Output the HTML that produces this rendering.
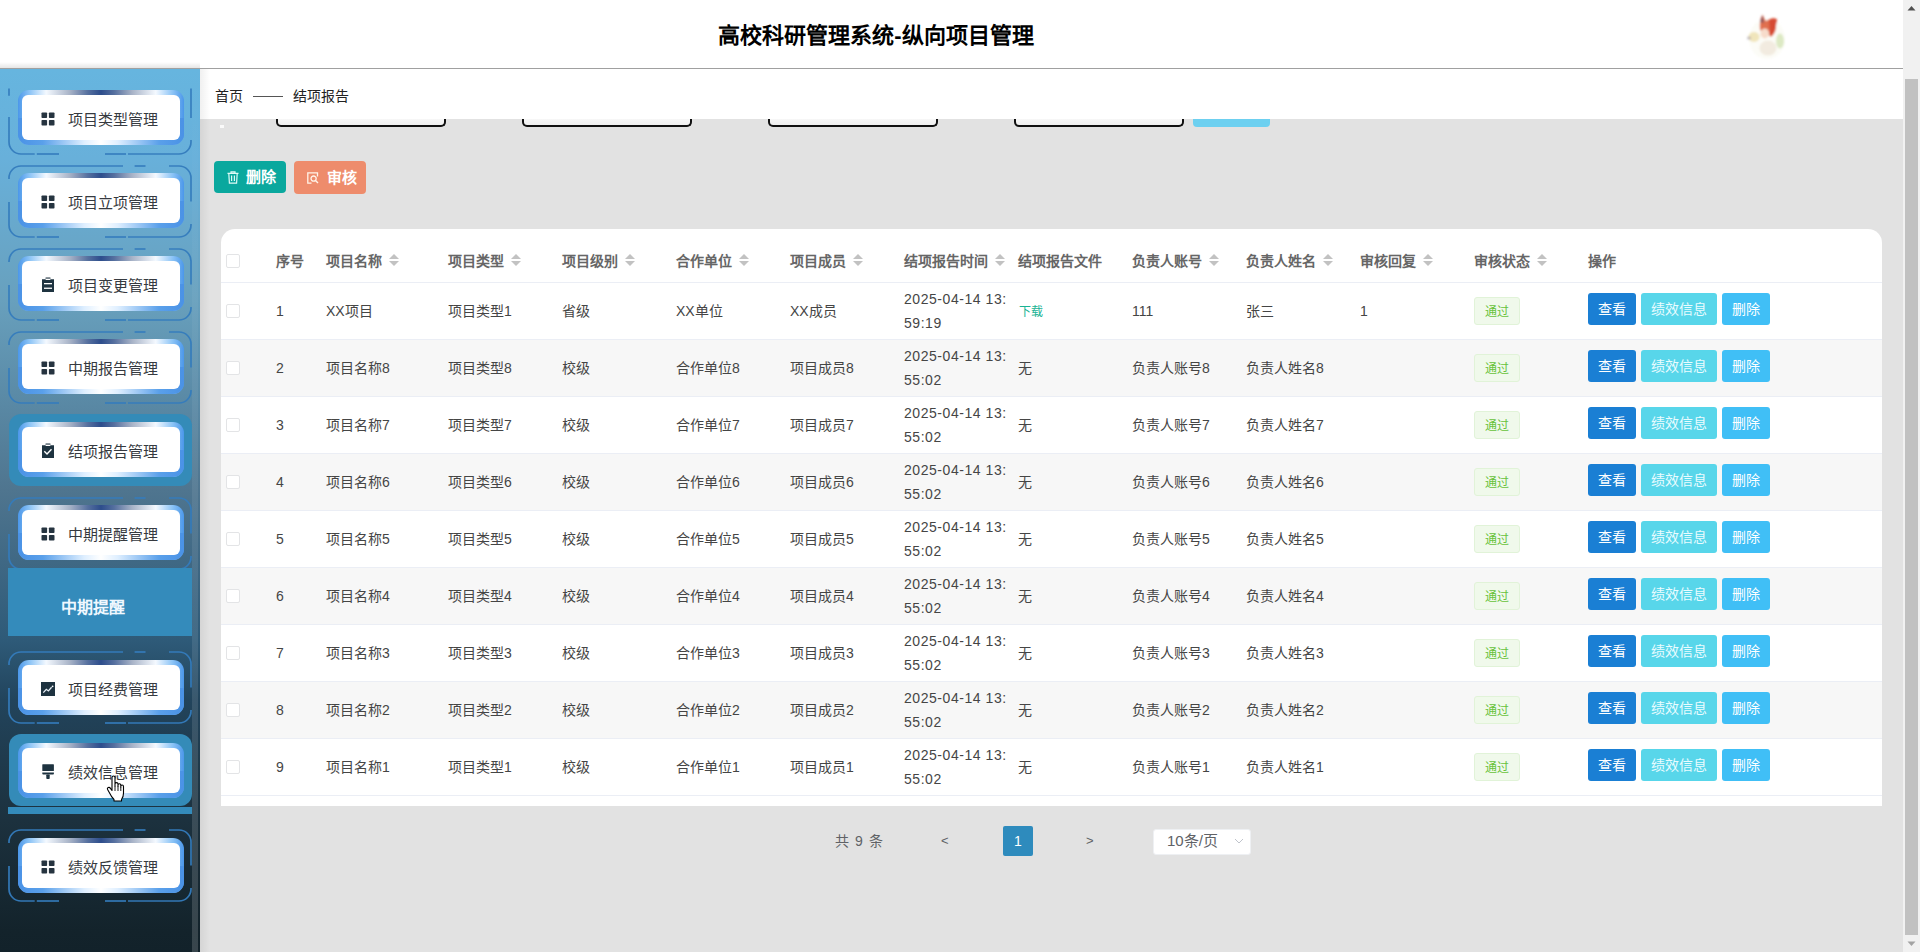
<!DOCTYPE html><html lang="zh-CN"><head><meta charset="utf-8"><title>高校科研管理系统</title><style>
*{box-sizing:border-box;margin:0;padding:0}
html,body{width:1920px;height:952px;overflow:hidden}
body{position:relative;background:#e2e2e2;font-family:"Liberation Sans",sans-serif;color:#606266}
.abs{position:absolute}
#hdr{position:absolute;left:0;top:0;width:1903px;height:69px;background:#fff;border-bottom:1px solid #a0a0a0}
#title{position:absolute;left:0;top:2px;width:1752px;text-align:center;line-height:68px;font-size:22px;font-weight:bold;color:#000;letter-spacing:0px}
#sb{position:absolute;left:0;top:69px;width:200px;height:883px;
 background:linear-gradient(to bottom,#66b5df 0px,#68b0da 90px,#68a0bd 231px,#5988a4 337px,#4f758f 421px,#2e5a78 572px,#22445c 631px,#1c313e 752px,#13232b 862px,#12222a 883px)}
#shadow{position:absolute;left:200px;top:69px;width:10px;height:883px;background:linear-gradient(to right,rgba(0,0,0,0.06),rgba(0,0,0,0))}
#bc{position:absolute;left:200px;top:69px;width:1703px;height:50px;background:#fff}
.bct{position:absolute;top:87px;font-size:14px;color:#222;line-height:18px}
.inp{position:absolute;top:119px;width:170px;height:8px;border:2px solid #111;border-top:none;border-radius:0 0 5px 5px;background:linear-gradient(#f7f7f7,#f0f0f0)}
.btn1{position:absolute;top:161px;height:32px;border-radius:4px;color:#fff;font-size:15px;line-height:32px;font-weight:bold}
#card{position:absolute;left:221px;top:229px;width:1661px;height:577px;background:#fff;border-radius:14px 14px 0 0}
.row{position:absolute;left:221px;width:1661px;height:57px;border-bottom:1px solid #ebeef5}
.cb{position:absolute;left:226px;width:14px;height:14px;border:1px solid #e3e4e6;border-radius:2px;background:#fff}
.th{position:absolute;top:252px;font-size:14px;font-weight:bold;color:#666;line-height:18px;white-space:nowrap}
.td{position:absolute;font-size:14px;color:#454545;line-height:18px;white-space:nowrap}
.sort{position:absolute;top:254px;width:10px;height:12px}
.tag{position:absolute;width:46px;height:28px;background:#f0f9eb;border:1px solid #e1f3d8;border-radius:3px;color:#67c23a;font-size:12px;line-height:28px;text-align:center}
.ob{position:absolute;height:32px;border-radius:3px;color:#fff;font-size:14px;line-height:32px;text-align:center}
.mi{position:absolute;left:9px;width:182px;height:71px;border:2px solid #3a7fbd;border-radius:10px}
.glow{position:absolute;left:18px;width:166px;height:55px;border-radius:11px;
 background:linear-gradient(to right,#4b97ea 0%,#8cc4f6 7%,#f4f9ff 17%,#a9b4c8 31%,#56709f 42%,#2d4d8c 50%,#56709f 58%,#a9b4c8 69%,#f4f9ff 83%,#8cc4f6 93%,#4b97ea 100%)}
.glowb{position:absolute;left:0;right:0;bottom:0;height:50%;border-radius:0 0 11px 11px;
 background:linear-gradient(to right,#4a92e6 0%,#5aa0ea 15%,#dfefff 40%,#ffffff 50%,#dfefff 60%,#5aa0ea 85%,#4a92e6 100%)}
.wbox{position:absolute;left:22px;width:158px;height:45px;background:#fff;border-radius:6px}
.mt{position:absolute;left:68px;font-size:15px;color:#363a40;line-height:20px;white-space:nowrap}
.ic{position:absolute;left:41px;width:14px;height:14px}
.ic svg,.sort svg{display:block}
</style></head><body>
<div id="hdr"><div id="title">高校科研管理系统-纵向项目管理</div></div>
<svg class="abs" style="left:1740px;top:8px" width="52" height="54" viewBox="0 0 52 54">
<defs><filter id="bl" x="-50%" y="-50%" width="200%" height="200%"><feGaussianBlur stdDeviation="0.9"/></filter></defs>
<g filter="url(#bl)">
<ellipse cx="27" cy="31" rx="18" ry="20" fill="#fbfbf4" opacity="0.7"/>
<ellipse cx="14" cy="29" rx="5.5" ry="5" fill="#efe2b0" opacity="0.85"/>
<ellipse cx="9" cy="30" rx="2" ry="1.5" fill="#9a8fa0" opacity="0.6"/>
<ellipse cx="40" cy="33" rx="4" ry="7.5" fill="#d9e8bf" opacity="0.9"/>
<ellipse cx="28" cy="40" rx="8.5" ry="7.5" fill="#f2ebe0"/>
<path d="M20 22 Q19 12 22.5 6.8 Q25 12 26 13 Q31 9 37 11.4 Q35 16 36 20 Q35 26 31 29 L28 26 Z" fill="#e07050"/>
<path d="M20 14 Q22 9 22.5 7 Q23.5 11 24 15 Z" fill="#8a5a60"/>
<path d="M29 12 Q33 9 37 11.4 Q36 18 35 22 Q33 27 30 28 Z" fill="#d64a32"/>
<ellipse cx="24.8" cy="25.5" rx="4.3" ry="5" fill="#f7dccb"/>
</g></svg>
<div id="sb"></div><div class="abs" style="left:192px;top:69px;width:6px;height:883px;background:linear-gradient(rgba(255,255,255,0) 0px,rgba(255,255,255,0.06) 330px,rgba(255,255,255,0.10) 600px,rgba(255,255,255,0.16) 883px)"></div><div class="abs" style="left:0;top:62px;width:200px;height:6px;background:linear-gradient(rgba(0,0,0,0),rgba(0,0,0,0.10))"></div>
<svg class="abs" style="left:8px;top:82px" width="184" height="73" viewBox="0 0 184 73"><g stroke="#347cbd" stroke-width="1.7" fill="none" opacity="0.95"><path d="M1 6.4 V13.7"/><path d="M183 6.4 V36"/><path d="M183 58 V60 A12 12 0 0 1 171 72 H120"/><path d="M118 72 H97"/><path d="M51 72 H28.8"/><path d="M26.7 72 H13 A12 12 0 0 1 1 60 V35"/></g></svg>
<div class="glow" style="top:90px"><div class="glowb"></div></div>
<div class="wbox" style="top:95px"></div>
<div class="ic" style="top:112px"><svg viewBox="0 0 14 14" width="14" height="14"><rect x="0.5" y="0.5" width="5.6" height="5.6" rx="0.8" fill="#263440"/><rect x="7.9" y="0.5" width="5.6" height="5.6" rx="0.8" fill="#263440"/><rect x="0.5" y="7.9" width="5.6" height="5.6" rx="0.8" fill="#263440"/><rect x="7.9" y="7.9" width="5.6" height="5.6" rx="0.8" fill="#263440"/></svg></div>
<div class="mt" style="top:110px">项目类型管理</div>
<svg class="abs" style="left:8px;top:165px" width="184" height="73" viewBox="0 0 184 73"><g stroke="#347cbd" stroke-width="1.7" fill="none" opacity="0.95"><path d="M1 14 V13 A12 12 0 0 1 13 1 H115"/><path d="M126.6 1 H137.5"/><path d="M161 1 H171 A12 12 0 0 1 183 13 V36.6"/><path d="M183 59 V60 A12 12 0 0 1 171 72 H120"/><path d="M118 72 H97"/><path d="M51 72 H28.8"/><path d="M26.7 72 H13 A12 12 0 0 1 1 60 V37"/></g></svg>
<div class="glow" style="top:173px"><div class="glowb"></div></div>
<div class="wbox" style="top:178px"></div>
<div class="ic" style="top:195px"><svg viewBox="0 0 14 14" width="14" height="14"><rect x="0.5" y="0.5" width="5.6" height="5.6" rx="0.8" fill="#263440"/><rect x="7.9" y="0.5" width="5.6" height="5.6" rx="0.8" fill="#263440"/><rect x="0.5" y="7.9" width="5.6" height="5.6" rx="0.8" fill="#263440"/><rect x="7.9" y="7.9" width="5.6" height="5.6" rx="0.8" fill="#263440"/></svg></div>
<div class="mt" style="top:193px">项目立项管理</div>
<svg class="abs" style="left:8px;top:248px" width="184" height="73" viewBox="0 0 184 73"><g stroke="#347cbd" stroke-width="1.7" fill="none" opacity="0.95"><path d="M1 14 V13 A12 12 0 0 1 13 1 H115"/><path d="M126.6 1 H137.5"/><path d="M161 1 H171 A12 12 0 0 1 183 13 V36.6"/><path d="M183 59 V60 A12 12 0 0 1 171 72 H120"/><path d="M118 72 H97"/><path d="M51 72 H28.8"/><path d="M26.7 72 H13 A12 12 0 0 1 1 60 V37"/></g></svg>
<div class="glow" style="top:256px"><div class="glowb"></div></div>
<div class="wbox" style="top:261px"></div>
<div class="ic" style="top:277px"><svg viewBox="0 0 14 16" width="14" height="16"><path d="M1 2.2 H4.6 V0.6 H9.4 V2.2 H13 V15 H1 Z" fill="#1e3340"/><rect x="4.6" y="1.6" width="4.8" height="1.4" fill="#fff"/><rect x="3" y="6" width="8" height="1.3" fill="#fff"/><rect x="3" y="10.6" width="8" height="1.3" fill="#fff"/></svg></div>
<div class="mt" style="top:276px">项目变更管理</div>
<svg class="abs" style="left:8px;top:331px" width="184" height="73" viewBox="0 0 184 73"><g stroke="#347cbd" stroke-width="1.7" fill="none" opacity="0.95"><path d="M1 14 V13 A12 12 0 0 1 13 1 H115"/><path d="M126.6 1 H137.5"/><path d="M161 1 H171 A12 12 0 0 1 183 13 V36.6"/><path d="M183 59 V60 A12 12 0 0 1 171 72 H120"/><path d="M118 72 H97"/><path d="M51 72 H28.8"/><path d="M26.7 72 H13 A12 12 0 0 1 1 60 V37"/></g></svg>
<div class="glow" style="top:339px"><div class="glowb"></div></div>
<div class="wbox" style="top:344px"></div>
<div class="ic" style="top:361px"><svg viewBox="0 0 14 14" width="14" height="14"><rect x="0.5" y="0.5" width="5.6" height="5.6" rx="0.8" fill="#263440"/><rect x="7.9" y="0.5" width="5.6" height="5.6" rx="0.8" fill="#263440"/><rect x="0.5" y="7.9" width="5.6" height="5.6" rx="0.8" fill="#263440"/><rect x="7.9" y="7.9" width="5.6" height="5.6" rx="0.8" fill="#263440"/></svg></div>
<div class="mt" style="top:359px">中期报告管理</div>
<div class="mi" style="top:414px;background:#348bb8;border:none;height:72px;width:183px;border-radius:12px"></div>
<div class="glow" style="top:422px"><div class="glowb"></div></div>
<div class="wbox" style="top:427px"></div>
<div class="ic" style="top:443px"><svg viewBox="0 0 14 16" width="14" height="16"><path d="M1 2.2 H4.6 V0.6 H9.4 V2.2 H13 V15 H1 Z" fill="#1e3340"/><rect x="4.6" y="1.6" width="4.8" height="1.4" fill="#fff"/><path d="M3.3 8.3 L6 10.9 L10.5 6.2" stroke="#fff" stroke-width="1.4" fill="none"/></svg></div>
<div class="mt" style="top:442px">结项报告管理</div>
<svg class="abs" style="left:8px;top:497px" width="184" height="73" viewBox="0 0 184 73"><g stroke="#347cbd" stroke-width="1.7" fill="none" opacity="0.95"><path d="M1 14 V13 A12 12 0 0 1 13 1 H115"/><path d="M126.6 1 H137.5"/><path d="M161 1 H171 A12 12 0 0 1 183 13 V36.6"/><path d="M183 59 V60 A12 12 0 0 1 171 72 H120"/><path d="M118 72 H97"/><path d="M51 72 H28.8"/><path d="M26.7 72 H13 A12 12 0 0 1 1 60 V37"/></g></svg>
<div class="glow" style="top:505px"><div class="glowb"></div></div>
<div class="wbox" style="top:510px"></div>
<div class="ic" style="top:527px"><svg viewBox="0 0 14 14" width="14" height="14"><rect x="0.5" y="0.5" width="5.6" height="5.6" rx="0.8" fill="#263440"/><rect x="7.9" y="0.5" width="5.6" height="5.6" rx="0.8" fill="#263440"/><rect x="0.5" y="7.9" width="5.6" height="5.6" rx="0.8" fill="#263440"/><rect x="7.9" y="7.9" width="5.6" height="5.6" rx="0.8" fill="#263440"/></svg></div>
<div class="mt" style="top:525px">中期提醒管理</div>
<svg class="abs" style="left:8px;top:651px" width="184" height="73" viewBox="0 0 184 73"><g stroke="#347cbd" stroke-width="1.7" fill="none" opacity="0.95"><path d="M1 14 V13 A12 12 0 0 1 13 1 H115"/><path d="M126.6 1 H137.5"/><path d="M161 1 H171 A12 12 0 0 1 183 13 V36.6"/><path d="M183 59 V60 A12 12 0 0 1 171 72 H120"/><path d="M118 72 H97"/><path d="M51 72 H28.8"/><path d="M26.7 72 H13 A12 12 0 0 1 1 60 V37"/></g></svg>
<div class="glow" style="top:660px"><div class="glowb"></div></div>
<div class="wbox" style="top:665px"></div>
<div class="ic" style="top:682px"><svg viewBox="0 0 14 14" width="14" height="14"><rect x="0" y="0" width="14" height="14" fill="#1e3340"/><path d="M2.3 10.6 L5.3 7.3 L7.4 8.9 L10.6 5.2" stroke="#e8f0f8" stroke-width="1.3" fill="none"/><circle cx="11.6" cy="4.3" r="0.9" fill="#fff"/></svg></div>
<div class="mt" style="top:680px">项目经费管理</div>
<div class="mi" style="top:734px;background:#348bb8;border:none;height:72px;width:183px;border-radius:12px"></div>
<div class="glow" style="top:743px"><div class="glowb"></div></div>
<div class="wbox" style="top:748px"></div>
<div class="ic" style="top:764px"><svg viewBox="0 0 14 16" width="14" height="16"><rect x="1.3" y="0.2" width="11.6" height="6.8" rx="0.6" fill="#1e3340"/><path d="M1.3 8.5 H12.9 V9.8 Q12.9 10.6 12 10.6 H2.2 Q1.3 10.6 1.3 9.8 Z" fill="#1e3340"/><rect x="5.3" y="10.4" width="3.4" height="4.6" rx="0.8" fill="#1e3340"/></svg></div>
<div class="mt" style="top:763px">绩效信息管理</div>
<svg class="abs" style="left:8px;top:829px" width="184" height="73" viewBox="0 0 184 73"><g stroke="#347cbd" stroke-width="1.7" fill="none" opacity="0.95"><path d="M1 14 V13 A12 12 0 0 1 13 1 H115"/><path d="M126.6 1 H137.5"/><path d="M161 1 H171 A12 12 0 0 1 183 13 V36.6"/><path d="M183 59 V60 A12 12 0 0 1 171 72 H120"/><path d="M118 72 H97"/><path d="M51 72 H28.8"/><path d="M26.7 72 H13 A12 12 0 0 1 1 60 V37"/></g></svg>
<div class="glow" style="top:838px"><div class="glowb"></div></div>
<div class="wbox" style="top:843px"></div>
<div class="ic" style="top:860px"><svg viewBox="0 0 14 14" width="14" height="14"><rect x="0.5" y="0.5" width="5.6" height="5.6" rx="0.8" fill="#263440"/><rect x="7.9" y="0.5" width="5.6" height="5.6" rx="0.8" fill="#263440"/><rect x="0.5" y="7.9" width="5.6" height="5.6" rx="0.8" fill="#263440"/><rect x="7.9" y="7.9" width="5.6" height="5.6" rx="0.8" fill="#263440"/></svg></div>
<div class="mt" style="top:858px">绩效反馈管理</div>
<div class="abs" style="left:8px;top:568px;width:184px;height:68px;background:#348bbb"></div>
<div class="abs" style="left:61px;top:598px;font-size:16px;font-weight:bold;color:#f0f8ff;line-height:20px">中期提醒</div>
<div class="abs" style="left:8px;top:807px;width:184px;height:7px;background:#348bbb"></div>
<svg class="abs" style="left:106px;top:775px" width="22" height="28" viewBox="0 0 22 28">
<path d="M6 2.5 Q6 1 7.5 1 Q9 1 9 2.5 V11 V9 Q9 7.6 10.5 7.6 Q12 7.6 12 9 V11.5 V10 Q12 8.8 13.4 8.8 Q14.8 8.8 14.8 10 V12 V11 Q14.8 10 16.1 10 Q17.5 10 17.5 11.5 V18 Q17.5 22 15.5 24.5 V26 H8 V24.5 Q5.5 22 3 17 L1.6 14.5 Q1 13 2.3 12.5 Q3.6 12 4.6 13.6 L6 15.5 Z" fill="#fff" stroke="#000" stroke-width="1.1" stroke-linejoin="round"/>
<path d="M9 11 V16 M12 11.5 V16 M14.8 12 V16" stroke="#000" stroke-width="0.9"/>
</svg>
<div id="bc"></div><div id="shadow"></div>
<div class="bct" style="left:215px">首页</div>
<div class="abs" style="left:253px;top:96px;width:30px;height:1px;background:#555"></div>
<div class="bct" style="left:293px">结项报告</div>
<div class="inp" style="left:276px"></div>
<div class="inp" style="left:522px"></div>
<div class="inp" style="left:768px"></div>
<div class="inp" style="left:1014px"></div>
<div class="abs" style="left:1193px;top:119px;width:77px;height:8px;background:#6dd0f0;border-radius:0 0 4px 4px"></div>
<div class="abs" style="left:220px;top:125px;width:4px;height:3px;background:#fafafa"></div>
<div class="btn1" style="left:214px;width:72px;background:#0aa89e"><svg class="abs" style="left:13px;top:10px" width="12" height="13" viewBox="0 0 12 13"><path d="M0.5 2.3 H11.5 M4 2.3 V0.8 H8 V2.3 M1.8 2.3 L2.4 12.2 H9.6 L10.2 2.3 M4.6 4.6 V10 M7.4 4.6 V10" stroke="#dffaf6" stroke-width="1.2" fill="none"/></svg><span class="abs" style="left:32px;top:0">删除</span></div>
<div class="btn1" style="left:294px;width:72px;height:33px;background:#ee8c6c"><svg class="abs" style="left:13px;top:11px" width="12" height="12" viewBox="0 0 12 12"><path d="M10.5 4.5 V0.8 H0.8 V11.2 H4.5" stroke="#fff3e8" stroke-width="1.3" fill="none"/><circle cx="6.6" cy="6.6" r="2.6" stroke="#fff3e8" stroke-width="1.3" fill="none"/><path d="M8.5 8.5 L11 11" stroke="#fff3e8" stroke-width="1.4"/></svg><span class="abs" style="left:33px;top:1px">审核</span></div>
<div id="card"></div>
<div class="abs" style="left:221px;top:282px;width:1661px;height:1px;background:#ebeef5"></div>
<div class="cb" style="top:254px"></div>
<div class="th" style="left:276px">序号</div>
<div class="th" style="left:326px">项目名称</div>
<div class="sort" style="left:389px"><svg viewBox="0 0 10 12" width="10" height="12"><path d="M5 0 L10 5 H0 Z" fill="#c2c2c2"/><path d="M5 12 L10 7 H0 Z" fill="#c2c2c2"/></svg></div>
<div class="th" style="left:448px">项目类型</div>
<div class="sort" style="left:511px"><svg viewBox="0 0 10 12" width="10" height="12"><path d="M5 0 L10 5 H0 Z" fill="#c2c2c2"/><path d="M5 12 L10 7 H0 Z" fill="#c2c2c2"/></svg></div>
<div class="th" style="left:562px">项目级别</div>
<div class="sort" style="left:625px"><svg viewBox="0 0 10 12" width="10" height="12"><path d="M5 0 L10 5 H0 Z" fill="#c2c2c2"/><path d="M5 12 L10 7 H0 Z" fill="#c2c2c2"/></svg></div>
<div class="th" style="left:676px">合作单位</div>
<div class="sort" style="left:739px"><svg viewBox="0 0 10 12" width="10" height="12"><path d="M5 0 L10 5 H0 Z" fill="#c2c2c2"/><path d="M5 12 L10 7 H0 Z" fill="#c2c2c2"/></svg></div>
<div class="th" style="left:790px">项目成员</div>
<div class="sort" style="left:853px"><svg viewBox="0 0 10 12" width="10" height="12"><path d="M5 0 L10 5 H0 Z" fill="#c2c2c2"/><path d="M5 12 L10 7 H0 Z" fill="#c2c2c2"/></svg></div>
<div class="th" style="left:904px">结项报告时间</div>
<div class="sort" style="left:995px"><svg viewBox="0 0 10 12" width="10" height="12"><path d="M5 0 L10 5 H0 Z" fill="#c2c2c2"/><path d="M5 12 L10 7 H0 Z" fill="#c2c2c2"/></svg></div>
<div class="th" style="left:1018px">结项报告文件</div>
<div class="th" style="left:1132px">负责人账号</div>
<div class="sort" style="left:1209px"><svg viewBox="0 0 10 12" width="10" height="12"><path d="M5 0 L10 5 H0 Z" fill="#c2c2c2"/><path d="M5 12 L10 7 H0 Z" fill="#c2c2c2"/></svg></div>
<div class="th" style="left:1246px">负责人姓名</div>
<div class="sort" style="left:1323px"><svg viewBox="0 0 10 12" width="10" height="12"><path d="M5 0 L10 5 H0 Z" fill="#c2c2c2"/><path d="M5 12 L10 7 H0 Z" fill="#c2c2c2"/></svg></div>
<div class="th" style="left:1360px">审核回复</div>
<div class="sort" style="left:1423px"><svg viewBox="0 0 10 12" width="10" height="12"><path d="M5 0 L10 5 H0 Z" fill="#c2c2c2"/><path d="M5 12 L10 7 H0 Z" fill="#c2c2c2"/></svg></div>
<div class="th" style="left:1474px">审核状态</div>
<div class="sort" style="left:1537px"><svg viewBox="0 0 10 12" width="10" height="12"><path d="M5 0 L10 5 H0 Z" fill="#c2c2c2"/><path d="M5 12 L10 7 H0 Z" fill="#c2c2c2"/></svg></div>
<div class="th" style="left:1588px">操作</div>
<div class="row" style="top:283px;background:#fff"></div>
<div class="cb" style="top:304px"></div>
<div class="td" style="left:276px;top:302px">1</div>
<div class="td" style="left:326px;top:302px">XX项目</div>
<div class="td" style="left:448px;top:302px">项目类型1</div>
<div class="td" style="left:562px;top:302px">省级</div>
<div class="td" style="left:676px;top:302px">XX单位</div>
<div class="td" style="left:790px;top:302px">XX成员</div>
<div class="td" style="left:904px;top:287px;line-height:24px;letter-spacing:0.55px">2025-04-14 13:<br>59:19</div>
<div class="td" style="left:1019px;top:303px;font-size:12px;color:#1ab394">下载</div>
<div class="td" style="left:1132px;top:302px">111</div>
<div class="td" style="left:1246px;top:302px">张三</div>
<div class="td" style="left:1360px;top:302px">1</div>
<div class="tag" style="left:1474px;top:297px">通过</div>
<div class="ob" style="left:1588px;top:293px;width:48px;background:#1a7fd4">查看</div>
<div class="ob" style="left:1641px;top:293px;width:76px;background:#58d6ea;color:#eafcff">绩效信息</div>
<div class="ob" style="left:1722px;top:293px;width:48px;background:#40bff6">删除</div>
<div class="row" style="top:340px;background:#f7f7f7"></div>
<div class="cb" style="top:361px"></div>
<div class="td" style="left:276px;top:359px">2</div>
<div class="td" style="left:326px;top:359px">项目名称8</div>
<div class="td" style="left:448px;top:359px">项目类型8</div>
<div class="td" style="left:562px;top:359px">校级</div>
<div class="td" style="left:676px;top:359px">合作单位8</div>
<div class="td" style="left:790px;top:359px">项目成员8</div>
<div class="td" style="left:904px;top:344px;line-height:24px;letter-spacing:0.55px">2025-04-14 13:<br>55:02</div>
<div class="td" style="left:1018px;top:359px">无</div>
<div class="td" style="left:1132px;top:359px">负责人账号8</div>
<div class="td" style="left:1246px;top:359px">负责人姓名8</div>
<div class="tag" style="left:1474px;top:354px">通过</div>
<div class="ob" style="left:1588px;top:350px;width:48px;background:#1a7fd4">查看</div>
<div class="ob" style="left:1641px;top:350px;width:76px;background:#58d6ea;color:#eafcff">绩效信息</div>
<div class="ob" style="left:1722px;top:350px;width:48px;background:#40bff6">删除</div>
<div class="row" style="top:397px;background:#fff"></div>
<div class="cb" style="top:418px"></div>
<div class="td" style="left:276px;top:416px">3</div>
<div class="td" style="left:326px;top:416px">项目名称7</div>
<div class="td" style="left:448px;top:416px">项目类型7</div>
<div class="td" style="left:562px;top:416px">校级</div>
<div class="td" style="left:676px;top:416px">合作单位7</div>
<div class="td" style="left:790px;top:416px">项目成员7</div>
<div class="td" style="left:904px;top:401px;line-height:24px;letter-spacing:0.55px">2025-04-14 13:<br>55:02</div>
<div class="td" style="left:1018px;top:416px">无</div>
<div class="td" style="left:1132px;top:416px">负责人账号7</div>
<div class="td" style="left:1246px;top:416px">负责人姓名7</div>
<div class="tag" style="left:1474px;top:411px">通过</div>
<div class="ob" style="left:1588px;top:407px;width:48px;background:#1a7fd4">查看</div>
<div class="ob" style="left:1641px;top:407px;width:76px;background:#58d6ea;color:#eafcff">绩效信息</div>
<div class="ob" style="left:1722px;top:407px;width:48px;background:#40bff6">删除</div>
<div class="row" style="top:454px;background:#f7f7f7"></div>
<div class="cb" style="top:475px"></div>
<div class="td" style="left:276px;top:473px">4</div>
<div class="td" style="left:326px;top:473px">项目名称6</div>
<div class="td" style="left:448px;top:473px">项目类型6</div>
<div class="td" style="left:562px;top:473px">校级</div>
<div class="td" style="left:676px;top:473px">合作单位6</div>
<div class="td" style="left:790px;top:473px">项目成员6</div>
<div class="td" style="left:904px;top:458px;line-height:24px;letter-spacing:0.55px">2025-04-14 13:<br>55:02</div>
<div class="td" style="left:1018px;top:473px">无</div>
<div class="td" style="left:1132px;top:473px">负责人账号6</div>
<div class="td" style="left:1246px;top:473px">负责人姓名6</div>
<div class="tag" style="left:1474px;top:468px">通过</div>
<div class="ob" style="left:1588px;top:464px;width:48px;background:#1a7fd4">查看</div>
<div class="ob" style="left:1641px;top:464px;width:76px;background:#58d6ea;color:#eafcff">绩效信息</div>
<div class="ob" style="left:1722px;top:464px;width:48px;background:#40bff6">删除</div>
<div class="row" style="top:511px;background:#fff"></div>
<div class="cb" style="top:532px"></div>
<div class="td" style="left:276px;top:530px">5</div>
<div class="td" style="left:326px;top:530px">项目名称5</div>
<div class="td" style="left:448px;top:530px">项目类型5</div>
<div class="td" style="left:562px;top:530px">校级</div>
<div class="td" style="left:676px;top:530px">合作单位5</div>
<div class="td" style="left:790px;top:530px">项目成员5</div>
<div class="td" style="left:904px;top:515px;line-height:24px;letter-spacing:0.55px">2025-04-14 13:<br>55:02</div>
<div class="td" style="left:1018px;top:530px">无</div>
<div class="td" style="left:1132px;top:530px">负责人账号5</div>
<div class="td" style="left:1246px;top:530px">负责人姓名5</div>
<div class="tag" style="left:1474px;top:525px">通过</div>
<div class="ob" style="left:1588px;top:521px;width:48px;background:#1a7fd4">查看</div>
<div class="ob" style="left:1641px;top:521px;width:76px;background:#58d6ea;color:#eafcff">绩效信息</div>
<div class="ob" style="left:1722px;top:521px;width:48px;background:#40bff6">删除</div>
<div class="row" style="top:568px;background:#f7f7f7"></div>
<div class="cb" style="top:589px"></div>
<div class="td" style="left:276px;top:587px">6</div>
<div class="td" style="left:326px;top:587px">项目名称4</div>
<div class="td" style="left:448px;top:587px">项目类型4</div>
<div class="td" style="left:562px;top:587px">校级</div>
<div class="td" style="left:676px;top:587px">合作单位4</div>
<div class="td" style="left:790px;top:587px">项目成员4</div>
<div class="td" style="left:904px;top:572px;line-height:24px;letter-spacing:0.55px">2025-04-14 13:<br>55:02</div>
<div class="td" style="left:1018px;top:587px">无</div>
<div class="td" style="left:1132px;top:587px">负责人账号4</div>
<div class="td" style="left:1246px;top:587px">负责人姓名4</div>
<div class="tag" style="left:1474px;top:582px">通过</div>
<div class="ob" style="left:1588px;top:578px;width:48px;background:#1a7fd4">查看</div>
<div class="ob" style="left:1641px;top:578px;width:76px;background:#58d6ea;color:#eafcff">绩效信息</div>
<div class="ob" style="left:1722px;top:578px;width:48px;background:#40bff6">删除</div>
<div class="row" style="top:625px;background:#fff"></div>
<div class="cb" style="top:646px"></div>
<div class="td" style="left:276px;top:644px">7</div>
<div class="td" style="left:326px;top:644px">项目名称3</div>
<div class="td" style="left:448px;top:644px">项目类型3</div>
<div class="td" style="left:562px;top:644px">校级</div>
<div class="td" style="left:676px;top:644px">合作单位3</div>
<div class="td" style="left:790px;top:644px">项目成员3</div>
<div class="td" style="left:904px;top:629px;line-height:24px;letter-spacing:0.55px">2025-04-14 13:<br>55:02</div>
<div class="td" style="left:1018px;top:644px">无</div>
<div class="td" style="left:1132px;top:644px">负责人账号3</div>
<div class="td" style="left:1246px;top:644px">负责人姓名3</div>
<div class="tag" style="left:1474px;top:639px">通过</div>
<div class="ob" style="left:1588px;top:635px;width:48px;background:#1a7fd4">查看</div>
<div class="ob" style="left:1641px;top:635px;width:76px;background:#58d6ea;color:#eafcff">绩效信息</div>
<div class="ob" style="left:1722px;top:635px;width:48px;background:#40bff6">删除</div>
<div class="row" style="top:682px;background:#f7f7f7"></div>
<div class="cb" style="top:703px"></div>
<div class="td" style="left:276px;top:701px">8</div>
<div class="td" style="left:326px;top:701px">项目名称2</div>
<div class="td" style="left:448px;top:701px">项目类型2</div>
<div class="td" style="left:562px;top:701px">校级</div>
<div class="td" style="left:676px;top:701px">合作单位2</div>
<div class="td" style="left:790px;top:701px">项目成员2</div>
<div class="td" style="left:904px;top:686px;line-height:24px;letter-spacing:0.55px">2025-04-14 13:<br>55:02</div>
<div class="td" style="left:1018px;top:701px">无</div>
<div class="td" style="left:1132px;top:701px">负责人账号2</div>
<div class="td" style="left:1246px;top:701px">负责人姓名2</div>
<div class="tag" style="left:1474px;top:696px">通过</div>
<div class="ob" style="left:1588px;top:692px;width:48px;background:#1a7fd4">查看</div>
<div class="ob" style="left:1641px;top:692px;width:76px;background:#58d6ea;color:#eafcff">绩效信息</div>
<div class="ob" style="left:1722px;top:692px;width:48px;background:#40bff6">删除</div>
<div class="row" style="top:739px;background:#fff"></div>
<div class="cb" style="top:760px"></div>
<div class="td" style="left:276px;top:758px">9</div>
<div class="td" style="left:326px;top:758px">项目名称1</div>
<div class="td" style="left:448px;top:758px">项目类型1</div>
<div class="td" style="left:562px;top:758px">校级</div>
<div class="td" style="left:676px;top:758px">合作单位1</div>
<div class="td" style="left:790px;top:758px">项目成员1</div>
<div class="td" style="left:904px;top:743px;line-height:24px;letter-spacing:0.55px">2025-04-14 13:<br>55:02</div>
<div class="td" style="left:1018px;top:758px">无</div>
<div class="td" style="left:1132px;top:758px">负责人账号1</div>
<div class="td" style="left:1246px;top:758px">负责人姓名1</div>
<div class="tag" style="left:1474px;top:753px">通过</div>
<div class="ob" style="left:1588px;top:749px;width:48px;background:#1a7fd4">查看</div>
<div class="ob" style="left:1641px;top:749px;width:76px;background:#58d6ea;color:#eafcff">绩效信息</div>
<div class="ob" style="left:1722px;top:749px;width:48px;background:#40bff6">删除</div>
<div class="abs" style="left:835px;top:832px;font-size:14px;color:#606266;line-height:18px;letter-spacing:1px">共 9 条</div>
<div class="abs" style="left:941px;top:832px;font-size:13px;color:#606266;line-height:18px">&lt;</div>
<div class="abs" style="left:1003px;top:826px;width:30px;height:30px;background:#2e8bbd;border-radius:2px;color:#fff;font-size:14px;line-height:30px;text-align:center">1</div>
<div class="abs" style="left:1086px;top:832px;font-size:13px;color:#606266;line-height:18px">&gt;</div>
<div class="abs" style="left:1153px;top:829px;width:98px;height:26px;background:#fff;border:1px solid #eef0f3;border-radius:3px"></div>
<div class="abs" style="left:1167px;top:831px;font-size:15px;color:#606266;line-height:20px">10条/页</div>
<svg class="abs" style="left:1234px;top:837px" width="10" height="8" viewBox="0 0 10 8"><path d="M1 2 L5 6 L9 2" stroke="#c0c4cc" stroke-width="1" fill="none"/></svg>
<div class="abs" style="left:1903px;top:0;width:17px;height:952px;background:#f1f1f1"></div>
<div class="abs" style="left:1905px;top:79px;width:13px;height:856px;background:#c1c1c1"></div>
<svg class="abs" style="left:1903px;top:0" width="17" height="17" viewBox="0 0 17 17"><path d="M4.5 10.5 L8.5 6 L12.5 10.5 Z" fill="#505050"/></svg>
<svg class="abs" style="left:1903px;top:935px" width="17" height="17" viewBox="0 0 17 17"><path d="M4.5 6.5 L8.5 11 L12.5 6.5 Z" fill="#a3a3a3"/></svg>
</body></html>
